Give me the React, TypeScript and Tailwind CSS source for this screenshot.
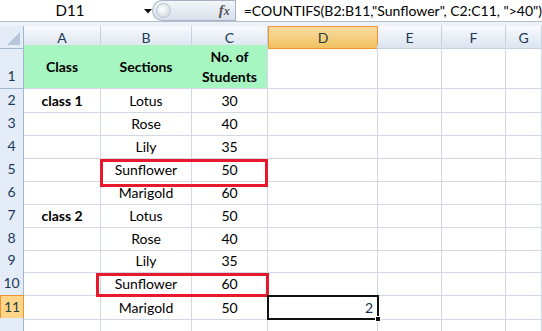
import React from "react";

const cols = ["A", "B", "C", "D", "E", "F", "G"];

const rows = [
  { n: 2, a: "class 1", b: "Lotus", c: "30", h: "h-[23px]" },
  { n: 3, a: "", b: "Rose", c: "40", h: "h-[23px]" },
  { n: 4, a: "", b: "Lily", c: "35", h: "h-[23px]" },
  { n: 5, a: "", b: "Sunflower", c: "50", h: "h-[23px]" },
  { n: 6, a: "", b: "Marigold", c: "60", h: "h-[23px]" },
  { n: 7, a: "class 2", b: "Lotus", c: "50", h: "h-[23px]" },
  { n: 8, a: "", b: "Rose", c: "40", h: "h-[22px]" },
  { n: 9, a: "", b: "Lily", c: "35", h: "h-[23px]" },
  { n: 10, a: "", b: "Sunflower", c: "60", h: "h-[23px]" },
  { n: 11, a: "", b: "Marigold", c: "50", h: "h-[23px]" },
];

const gridCols = "grid grid-cols-[24px_77px_91px_76px_110px_64px_64px_1fr]";

function FormulaBar() {
  return (
    <div className="flex h-[22px] border-b border-[#b4bfcd] bg-white">
      <div className="relative flex w-[157px] items-center">
        <span className="w-[140px] text-center text-[15px] text-black">D11</span>
        <svg className="absolute left-[144px] top-[9px]" width="8" height="5" viewBox="0 0 8 5">
          <path d="M0 0 H8 L4 4.5 Z" fill="#111" />
        </svg>
      </div>
      <div className="relative flex w-[85px] items-center justify-end rounded-l-full border border-r-0 border-[#a7b3c4] bg-gradient-to-b from-[#f3f6fa] to-[#d9e0ea] pr-[5px]">
        <div className="absolute left-[3px] top-[2px] h-[15px] w-[15px] rounded-full border border-[#b9c3d0] bg-[radial-gradient(circle_at_40%_40%,#ffffff,#c9d0da)]" />
        <span className="font-['Liberation_Serif',serif] text-[15px] font-bold italic text-[#555]">
          f<span className="text-[12px]">x</span>
        </span>
      </div>
      <div className="flex flex-1 items-center border-l border-[#a7b3c4] pl-[8px] text-[14px] whitespace-nowrap text-black">
        =COUNTIFS(B2:B11,"Sunflower", C2:C11, "&gt;40")
      </div>
    </div>
  );
}

function ColHeader() {
  return (
    <div className={`${gridCols} h-[19px]`}>
      <div className="relative border-r border-b border-[#9eb6ce] bg-[#e4ecf7]">
        <svg className="absolute right-[3px] bottom-[3px]" width="13" height="13" viewBox="0 0 13 13">
          <path d="M13 0 V13 H0 Z" fill="#b6c6da" />
        </svg>
      </div>
      {cols.map((c) =>
        c === "D" ? (
          <div
            key={c}
            className="flex items-center justify-center border border-[#f29536] bg-gradient-to-b from-[#f9dca0] to-[#f1c15f] text-[14px] text-[#27413e]"
          >
            {c}
          </div>
        ) : (
          <div
            key={c}
            className="flex items-center justify-center border-r border-b border-[#c5d1df] bg-gradient-to-b from-[#f8fafd] to-[#dce4ef] text-[14px] text-[#20395a]"
          >
            {c}
          </div>
        )
      )}
    </div>
  );
}

function RowHead({ n, active }: { n: number; active?: boolean }) {
  if (active) {
    return (
      <div className="flex items-end justify-center border border-[#f29536] bg-[#ffd58a] pb-[2px] text-[14px] text-[#27413e]">
        {n}
      </div>
    );
  }
  return (
    <div className="flex items-end justify-center border-r border-b border-[#9eb6ce] bg-[#e4ecf7] pb-[2px] text-[14px] text-[#20395a]">
      {n}
    </div>
  );
}

const cell = "flex items-center justify-center border-r border-b border-[#d0d7e5] text-[14px] text-black";
const blank = "border-r border-b border-[#d0d7e5]";

export default function App() {
  return (
    <div className="relative h-[331px] w-[542px] overflow-hidden bg-white font-['Lato','Liberation_Sans',sans-serif]">
      <FormulaBar />
      <div className="h-[4px] bg-[#eef2f8]" />
      <ColHeader />

      <div className={`${gridCols} h-[44px]`}>
        <RowHead n={1} />
        <div className="flex items-center justify-center border-r border-b border-r-[#a7f5c1] border-b-[#d0d7e5] bg-[#a7f5c1] text-[14px] font-bold">
          Class
        </div>
        <div className="flex items-center justify-center border-r border-b border-r-[#a7f5c1] border-b-[#d0d7e5] bg-[#a7f5c1] text-[14px] font-bold">
          Sections
        </div>
        <div className="flex items-center justify-center border-r border-b border-[#d0d7e5] bg-[#a7f5c1] text-center text-[14px] leading-[20px] font-bold">
          No. of
          <br />
          Students
        </div>
        <div className={blank} />
        <div className={blank} />
        <div className={blank} />
        <div className={blank} />
      </div>

      {rows.map((r) => (
        <div key={r.n} className={`${gridCols} ${r.h}`}>
          <RowHead n={r.n} active={r.n === 11} />
          <div className={`${cell} font-bold`}>{r.a}</div>
          <div className={cell}>{r.b}</div>
          <div className={cell}>{r.c}</div>
          <div className={blank} />
          <div className={blank} />
          <div className={blank} />
          <div className={blank} />
        </div>
      ))}

      <div className={`${gridCols} h-[13px]`}>
        <div className="border-r border-[#9eb6ce] bg-[#e4ecf7]" />
        <div className="border-r border-[#d0d7e5]" />
        <div className="border-r border-[#d0d7e5]" />
        <div className="border-r border-[#d0d7e5]" />
        <div className="border-r border-[#d0d7e5]" />
        <div className="border-r border-[#d0d7e5]" />
        <div className="border-r border-[#d0d7e5]" />
        <div className="border-r border-[#d0d7e5]" />
      </div>

      {/* highlight annotations */}
      <div className="pointer-events-none absolute left-[100px] top-[159px] h-[28px] w-[168px] border-[3px] border-[#e8192c]" />
      <div className="pointer-events-none absolute left-[96px] top-[273px] h-[24px] w-[173px] border-[3px] border-[#e8192c]" />

      {/* active cell D11 */}
      <div className="absolute left-[267px] top-[295px] flex h-[25px] w-[112px] items-center justify-end border-[2px] border-[#111] pr-[4px] text-[14px] text-[#1a2a55]">
        2
      </div>
      <div className="absolute left-[375px] top-[316px] h-[6px] w-[6px] border border-white bg-[#111]" />
    </div>
  );
}
